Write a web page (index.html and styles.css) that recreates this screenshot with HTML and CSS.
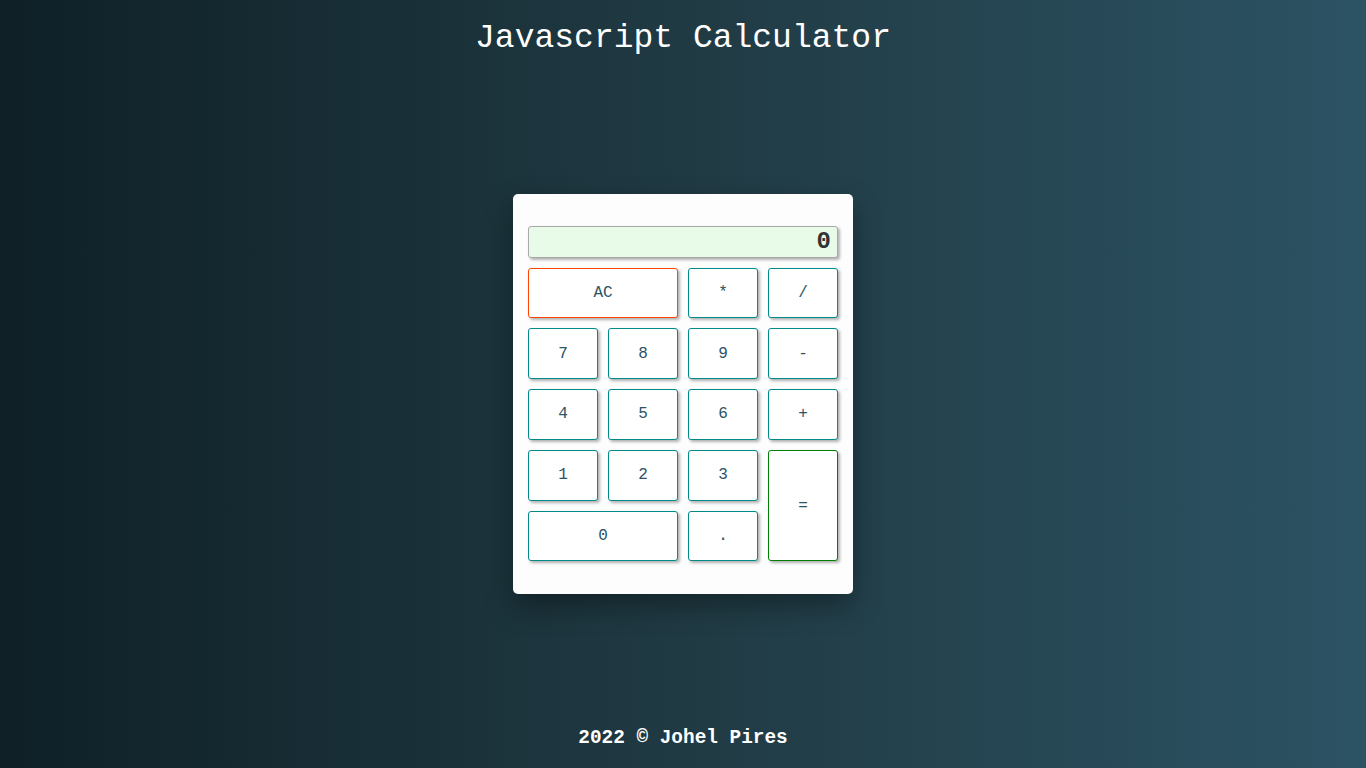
FILE: index.html
```html
<!DOCTYPE html>
<html lang="en">
<head>
<meta charset="utf-8">
<title>Javascript Calculator</title>
<link rel="stylesheet" href="styles.css">
</head>
<body>
<header class="header"><h1 class="title">Javascript Calculator</h1></header>
<main class="main">
  <div class="calculator">
    <div class="display">0</div>
    <div class="keys">
      <button class="key key-clear span-2">AC</button>
      <button class="key">*</button>
      <button class="key">/</button>
      <button class="key">7</button>
      <button class="key">8</button>
      <button class="key">9</button>
      <button class="key">-</button>
      <button class="key">4</button>
      <button class="key">5</button>
      <button class="key">6</button>
      <button class="key">+</button>
      <button class="key">1</button>
      <button class="key">2</button>
      <button class="key">3</button>
      <button class="key key-equals">=</button>
      <button class="key span-2">0</button>
      <button class="key">.</button>
    </div>
  </div>
</main>
<footer class="footer">2022 © Johel Pires</footer>
</body>
</html>
```
FILE: styles.css
```css
html, body {
  margin: 0;
  padding: 0;
}
body {
  height: 100vh;
  display: flex;
  flex-direction: column;
  background: linear-gradient(to right, #0f2027, #203a43, #2c5364);
  font-family: "Liberation Mono", "Courier New", monospace;
  color: #fff;
}
.header {
  text-align: center;
}
.title {
  margin: 18px 0 0;
  font-size: 33px;
  line-height: 42px;
  font-weight: normal;
}
.main {
  flex: 1;
  display: flex;
  align-items: center;
  justify-content: center;
}
.calculator {
  width: 310px;
  height: 336px;
  padding: 32px 15px;
  background: #fdfdfd;
  border-radius: 5px;
  box-shadow: 0 12px 28px rgba(0, 0, 0, 0.35);
}
.display {
  box-sizing: border-box;
  height: 32px;
  border: 1px solid #a9a9a9;
  border-radius: 3px;
  background: #e8fbe8;
  box-shadow: 2px 2px 3px rgba(0, 0, 0, 0.3);
  color: #333;
  font-size: 24px;
  font-weight: bold;
  line-height: 30px;
  text-align: right;
  padding-right: 6px;
}
.keys {
  margin-top: 10px;
  height: 294px;
  display: grid;
  grid-template-columns: repeat(4, 70px);
  grid-template-rows: repeat(5, 1fr);
  gap: 10px;
}
.key {
  font-family: "Liberation Mono", "Courier New", monospace;
  font-size: 16px;
  color: #2c5364;
  background: #fff;
  border: 1px solid #008b8b;
  border-radius: 3px;
  box-shadow: 2px 2px 3px rgba(0, 0, 0, 0.3);
  padding: 0;
  cursor: pointer;
}
.span-2 {
  grid-column: span 2;
}
.key-clear {
  border-color: #ff4500;
}
.key-equals {
  grid-column: 4;
  grid-row: 4 / span 2;
  border-color: #008000;
}
.footer {
  text-align: center;
  font-size: 19.4px;
  font-weight: bold;
  line-height: 22px;
  padding-bottom: 19px;
}
```
